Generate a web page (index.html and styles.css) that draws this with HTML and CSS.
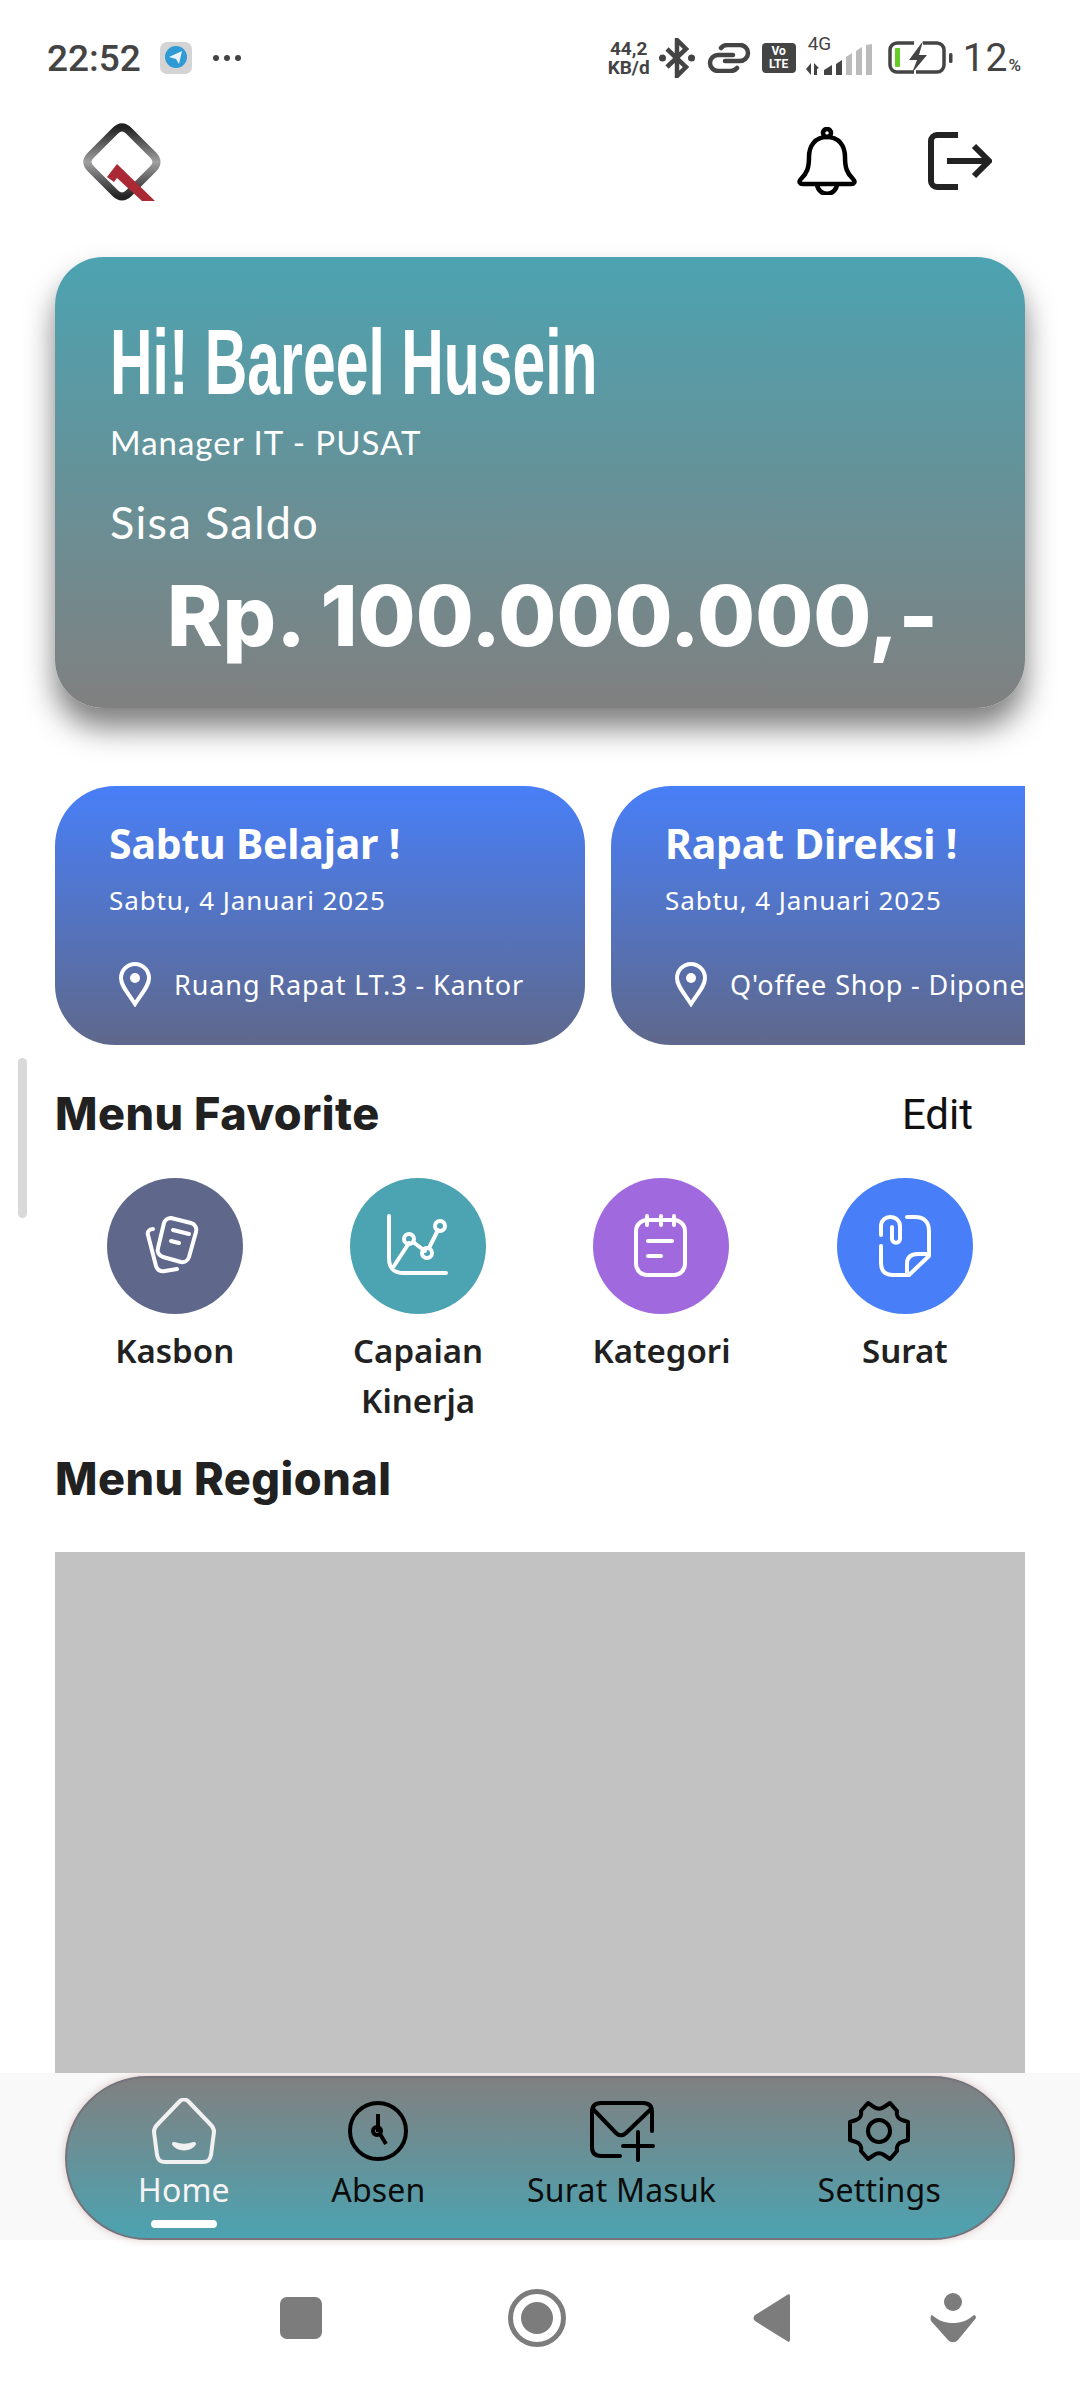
FILE: index.html
```html
<!DOCTYPE html>
<html lang="en">
<head>
    <meta charset="UTF-8">
    <meta name="viewport" content="width=device-width, initial-scale=1.0">
    <title>Home</title>
    <link rel="stylesheet" href="styles.css">
</head>
<body>
<div class="phone">
    <div class="status-bar">
        <div class="status-left">
            <span class="clock">22:52</span>
            <svg class="tg-icon" width="34" height="34" viewBox="0 0 34 34">
                <rect x="1" y="1" width="32" height="32" rx="7" fill="#d4d4d4"/>
                <circle cx="17" cy="16" r="11" fill="#2f9ad6"/>
                <path d="M10 16l13-6-3 13-3-5z" fill="#e8f3fa"/>
            </svg>
            <span class="dots"><i></i><i></i><i></i></span>
        </div>
        <div class="status-right">
            <span class="speed">44,2<br>KB/d</span>
            <svg width="36" height="40" viewBox="0 0 36 40" fill="none" stroke="#444" stroke-width="4.500">
                <path d="M8 11l19 18-9 9V2l9 9L8 29"/>
                <circle cx="3.500" cy="20" r="3.500" fill="#444" stroke="none"/>
                <circle cx="32.500" cy="20" r="3.500" fill="#444" stroke="none"/>
            </svg>
            <svg class="link-icon" width="44" height="30" viewBox="0 0 44 30" fill="none" stroke="#444" stroke-width="4.500" stroke-linecap="round">
                <path d="M26 12H11a8 8 0 0 0 0 16h13a8 8 0 0 0 6-3"/>
                <path d="M18 18h15a8 8 0 0 0 0-16H20a8 8 0 0 0-6 3"/>
            </svg>
            <span class="volte">Vo<br>LTE</span>
            <div class="signal">
                <span class="net">4G</span>
                <svg width="68" height="32" viewBox="0 0 68 32">
                    <path d="M6 19v12L1 25zM9 19l5 5-2 1v6H9z" fill="#444"/>
                    <path d="M19 26l8-5v10h-8zM31 20l6-4v15h-6z" fill="#444"/>
                    <path d="M41 13l6-4v22h-6zM51 7l6-4v28h-6zM61 1l6-1v31h-6z" fill="#bbb"/>
                </svg>
            </div>
            <svg class="battery-icon" width="66" height="36" viewBox="0 0 66 36" fill="none">
                <path d="M27 3H10a7 7 0 0 0-7 7v15a7 7 0 0 0 7 7h17M36 3h14a7 7 0 0 1 7 7v15a7 7 0 0 1-7 7H29" stroke="#444" stroke-width="3.500"/>
                <rect x="8" y="8" width="5" height="19" rx="1" fill="#65cc26"/>
                <path d="M36 1L22 20h8l-5 13 15-18h-8z" fill="#444"/>
                <rect x="62" y="13" width="3.500" height="10" rx="1.500" fill="#444"/>
            </svg>
            <span class="battery">12<small>%</small></span>
        </div>
    </div>

    <main class="content">
        <header class="top-bar">
            <svg class="logo" width="80" height="82" viewBox="0 0 80 82">
                <defs>
                    <linearGradient id="logoGrad" x1="0" y1="0" x2="0" y2="1">
                        <stop offset="0" stop-color="#222"/>
                        <stop offset="0.5" stop-color="#a0a0a0"/>
                        <stop offset="1" stop-color="#222"/>
                    </linearGradient>
                </defs>
                <path d="M33 9Q40 2 47 9L71 33Q78 40 71 47L47 71Q40 78 33 71L9 47Q2 40 9 33Z" fill="none" stroke="url(#logoGrad)" stroke-width="8"/>
                <path d="M25 55L35 42 73 79H60L35 56 32 60z" fill="#a92a35"/>
            </svg>
            <div class="top-actions">
                <svg width="62" height="68" viewBox="0 0 62 68" fill="none" stroke="#000" stroke-width="4.500">
                    <circle cx="31" cy="6" r="4"/>
                    <path d="M31 10c-12 0-18 9-18 20 0 11-2 16-8 22-3 3-1 5 2 5h48c3 0 5-2 2-5-6-6-8-11-8-22 0-11-6-20-18-20z" stroke-linejoin="round"/>
                    <path d="M21 57c1 13 19 13 20 0"/>
                </svg>
                <svg width="64" height="58" viewBox="0 0 64 58" fill="none" stroke="#222" stroke-width="6">
                    <path d="M30 3H9a6 6 0 0 0-6 6v40a6 6 0 0 0 6 6h21"/>
                    <path d="M19 29h41M46 14l15 15-15 15"/>
                </svg>
            </div>
        </header>

        <section class="balance-card">
            <div class="hello">Hi! Bareel Husein</div>
            <div class="role">Manager IT - PUSAT</div>
            <div class="balance-label">Sisa Saldo</div>
            <div class="balance-value">Rp. 100.000.000,-</div>
        </section>

        <section class="events">
            <div class="event-card">
                <div class="event-title">Sabtu Belajar !</div>
                <div class="event-date">Sabtu, 4 Januari 2025</div>
                <div class="event-place">
                    <svg class="pin" width="34" height="46" viewBox="0 0 34 46" fill="none" stroke="#fff" stroke-width="4">
                        <path d="M17 43C10 32 3 25 3 17a14 14 0 0 1 28 0c0 8-7 15-14 26z"/>
                        <circle cx="17" cy="17" r="5" fill="#fff" stroke="none"/>
                    </svg>
                    <span>Ruang Rapat LT.3 - Kantor</span>
                </div>
            </div>
            <div class="event-card">
                <div class="event-title">Rapat Direksi !</div>
                <div class="event-date">Sabtu, 4 Januari 2025</div>
                <div class="event-place">
                    <svg class="pin" width="34" height="46" viewBox="0 0 34 46" fill="none" stroke="#fff" stroke-width="4">
                        <path d="M17 43C10 32 3 25 3 17a14 14 0 0 1 28 0c0 8-7 15-14 26z"/>
                        <circle cx="17" cy="17" r="5" fill="#fff" stroke="none"/>
                    </svg>
                    <span>Q'offee Shop - Diponegoro</span>
                </div>
            </div>
        </section>

        <div class="section-head">
            <h2>Menu Favorite</h2>
            <span class="edit">Edit</span>
        </div>

        <section class="menu-grid">
            <div class="menu-item">
                <div class="menu-circle slate">
                    <svg width="64" height="64" viewBox="0 0 64 64" fill="none" stroke="#fff" stroke-width="4" stroke-linecap="round" stroke-linejoin="round">
                        <path d="M28 4l20 5a7 7 0 0 1 5 9l-7 25a7 7 0 0 1-8 5l-18-5a7 7 0 0 1-5-9l6-25a7 7 0 0 1 7-5z"/>
                        <path d="M30 16l16 4M28 27l8 2"/>
                        <path d="M10 15c-4 0-6 3-5 6l8 31c1 4 5 6 9 5l12-2"/>
                    </svg>
                </div>
                <span class="menu-label">Kasbon</span>
            </div>
            <div class="menu-item">
                <div class="menu-circle teal">
                    <svg width="64" height="64" viewBox="0 0 64 64" fill="none" stroke="#fff" stroke-width="4" stroke-linecap="round" stroke-linejoin="round">
                        <path d="M3 2v42c0 11 5 15 15 15h42"/>
                        <path d="M8 52l15-23M27 28l12 9M43 34l9-18"/>
                        <circle cx="23" cy="25" r="5"/>
                        <circle cx="41" cy="39" r="5"/>
                        <circle cx="54" cy="12" r="5"/>
                    </svg>
                </div>
                <span class="menu-label">Capaian<br>Kinerja</span>
            </div>
            <div class="menu-item">
                <div class="menu-circle purple">
                    <svg width="56" height="64" viewBox="0 0 56 64" fill="none" stroke="#fff" stroke-width="4" stroke-linecap="round" stroke-linejoin="round">
                        <rect x="3" y="6" width="49" height="55" rx="11"/>
                        <path d="M14 2v9M28 2v9M41 2v9"/>
                        <path d="M15 27h24M15 42h13"/>
                    </svg>
                </div>
                <span class="menu-label">Kategori</span>
            </div>
            <div class="menu-item">
                <div class="menu-circle blue">
                    <svg width="54" height="64" viewBox="0 0 54 64" fill="none" stroke="#fff" stroke-width="4" stroke-linecap="round" stroke-linejoin="round">
                        <path d="M3 21V11a9 9 0 0 1 9-8c6 0 10 4 10 9v13c0 5-8 5-8 0V13"/>
                        <path d="M29 3h8c9 0 14 5 14 14v25L31 61H15C7 61 3 57 3 49V32"/>
                        <path d="M29 60V50c0-7 4-10 11-10h11"/>
                    </svg>
                </div>
                <span class="menu-label">Surat</span>
            </div>
        </section>

        <h2 class="regional-head">Menu Regional</h2>
        <div class="regional-block"></div>
        <div class="scroll-thumb"></div>
    </main>

    <div class="nav-band">
        <nav class="bottom-nav">
            <div class="nav-item active">
                <svg width="66" height="66" viewBox="0 0 66 66" fill="none" stroke="#f1f1f1" stroke-width="4" stroke-linejoin="round">
                    <path d="M29 3c2-2 6-2 8 0l23 24c2 2 3 4 3 7l-3 23c-1 5-3 7-8 7H14c-5 0-7-2-8-7L3 34c0-3 1-5 3-7z"/>
                    <path d="M23 46c4 6 16 6 20 0-6 2-14 2-20 0z" fill="#f1f1f1"/>
                </svg>
                <span>Home</span>
                <i class="nav-line"></i>
            </div>
            <div class="nav-item">
                <svg width="62" height="66" viewBox="0 0 62 66" fill="none" stroke="#000" stroke-width="4">
                    <circle cx="31" cy="33" r="28"/>
                    <path d="M31 16v18M33 36l6 10"/>
                    <circle cx="30" cy="33" r="4"/>
                </svg>
                <span>Absen</span>
            </div>
            <div class="nav-item">
                <svg width="66" height="62" viewBox="0 0 66 62" fill="none" stroke="#000" stroke-width="4" stroke-linecap="round" stroke-linejoin="round">
                    <path d="M31 56H12C6 56 3 53 3 47V12c0-6 3-9 9-9h42c6 0 9 3 9 9v19"/>
                    <path d="M4 9l23 24c3 3 7 3 10 0L62 9"/>
                    <path d="M49 32v28M34 46h30"/>
                </svg>
                <span>Surat Masuk</span>
            </div>
            <div class="nav-item">
                <svg width="66" height="62" viewBox="0 0 66 62" fill="none" stroke="#000" stroke-width="4" stroke-linejoin="round">
                    <path d="M22 3l6 4c3 2 7 2 10 0l6-4 7 8c-1 4 1 8 5 9l6 2v18l-6 2c-4 1-6 5-5 9l-7 8-6-4c-3-2-7-2-10 0l-6 4-7-8c1-4-1-8-5-9l-6-2V22l6-2c4-1 6-5 5-9z"/>
                    <circle cx="33" cy="31" r="11"/>
                </svg>
                <span>Settings</span>
            </div>
        </nav>
    </div>

    <div class="system-nav">
        <span class="sys-square"></span>
        <span class="sys-circle"><i></i></span>
        <svg class="sys-back" width="40" height="50" viewBox="0 0 40 50">
            <path d="M38 3v44c0 2-2 2-3 1L3 28c-2-2-2-4 0-6L35 2c1-1 3-1 3 1z" fill="#7c7c7c"/>
        </svg>
        <svg class="sys-person" width="46" height="50" viewBox="0 0 46 50" fill="#7c7c7c">
            <circle cx="23" cy="9" r="9"/>
            <path d="M2 22c7 6 13 8 21 8s14-2 21-8c1 0 2 1 2 3L28 47c-3 3-7 3-10 0L1 28c-1-3 0-6 1-6z"/>
        </svg>
    </div>
</div>
</body>
</html>
```
FILE: styles.css
```css
* {
    box-sizing: border-box;
}

body {
    margin: 0;
    background-color: #fff;
    font-family: "Noto Sans", sans-serif;
}

.phone {
    width: 1080px;
    height: 2400px;
    overflow: hidden;
    display: flex;
    flex-direction: column;
}

/* status bar */
.status-bar {
    height: 100px;
    padding: 16px 58px 0 47px;
    display: flex;
    justify-content: space-between;
    align-items: center;
    color: #444;
    font-family: Roboto, sans-serif;
}

.status-left {
    display: flex;
    align-items: center;
}

.clock {
    font-size: 37px;
    font-weight: 500;
    margin-right: 18px;
}

.dots {
    display: flex;
    gap: 5px;
    margin-left: 20px;
}

.dots i {
    width: 6px;
    height: 6px;
    border-radius: 50%;
    background-color: #444;
}

.status-right {
    display: flex;
    align-items: center;
}

.speed {
    width: 44px;
    font-size: 19px;
    font-weight: 700;
    line-height: 19px;
    text-align: center;
    white-space: nowrap;
    margin-right: 8px;
}

.link-icon {
    margin-left: 12px;
}

.volte {
    width: 34px;
    height: 30px;
    margin-left: 11px;
    background-color: #444;
    border-radius: 4px;
    color: #fff;
    font-size: 12px;
    font-weight: 700;
    line-height: 13px;
    text-align: center;
    padding-top: 2px;
}

.signal {
    position: relative;
    width: 68px;
    height: 36px;
    margin-left: 9px;
}

.signal svg {
    position: absolute;
    left: 0;
    bottom: 0;
}

.net {
    position: absolute;
    left: 3px;
    top: -8px;
    font-size: 19px;
}

.battery-icon {
    margin-left: 14px;
}

.battery {
    margin-left: 10px;
    font-size: 39px;
    letter-spacing: 1px;
}

.battery small {
    font-size: 17px;
    font-weight: 500;
}

/* main content */
.content {
    position: relative;
    height: 1973px;
    padding: 0 55px;
    overflow: hidden;
    flex: none;
}

.top-bar {
    height: 157px;
    padding: 22px 33px 0 27px;
    display: flex;
    justify-content: space-between;
    align-items: flex-start;
}

.top-actions {
    display: flex;
    align-items: center;
    gap: 70px;
    margin-top: 5px;
}

.balance-card {
    height: 451px;
    padding: 66px 55px 0;
    border-radius: 48px;
    background: linear-gradient(#4ca3b1, #808080);
    box-shadow: 0 20px 30px rgba(0, 0, 0, 0.5);
    color: #fff;
}

.hello {
    height: 78px;
    font-family: "Liberation Sans", sans-serif;
    font-size: 92px;
    font-weight: 700;
    line-height: 78px;
    white-space: nowrap;
    transform: scaleX(0.64);
    transform-origin: left center;
}

.role {
    margin-top: 21px;
    font-family: Lato, sans-serif;
    font-size: 33px;
    letter-spacing: 1px;
}

.balance-label {
    margin-top: 33px;
    font-family: Lato, sans-serif;
    font-size: 45px;
    letter-spacing: 1.3px;
}

.balance-value {
    margin-top: 16px;
    padding-left: 25px;
    font-family: Inter, sans-serif;
    font-size: 84px;
    font-weight: 800;
    text-align: center;
    white-space: nowrap;
}

.events {
    margin-top: 78px;
    display: flex;
    gap: 26px;
    overflow: hidden;
}

.event-card {
    flex: none;
    width: 530px;
    height: 259px;
    padding: 29px 25px 0 54px;
    border-radius: 60px;
    background: linear-gradient(#487ff8, #5f688b);
    color: #fff;
}

.event-title {
    font-size: 41px;
    font-weight: 700;
    line-height: 56px;
    letter-spacing: -0.2px;
}

.event-date {
    margin-top: 11px;
    font-size: 26px;
    line-height: 36px;
    letter-spacing: 0.9px;
}

.event-place {
    margin-top: 43px;
    display: flex;
    align-items: center;
    gap: 22px;
    font-size: 27px;
    letter-spacing: 0.9px;
    white-space: nowrap;
}

.pin {
    flex: none;
    margin-left: 9px;
}

.section-head {
    margin-top: 40px;
    height: 56px;
    display: flex;
    justify-content: space-between;
    align-items: center;
    padding-right: 52px;
}

h2 {
    margin: 0;
    font-family: Inter, sans-serif;
    font-size: 45px;
    font-weight: 800;
    letter-spacing: 0.5px;
    color: #212121;
}

.edit {
    font-family: Roboto, sans-serif;
    font-size: 42px;
    padding-top: 2px;
    color: #111;
}

.menu-grid {
    margin-top: 37px;
    margin-left: -2px;
    display: grid;
    grid-template-columns: repeat(4, 243.4px);
}

.menu-item {
    display: flex;
    flex-direction: column;
    align-items: center;
}

.menu-circle {
    width: 136px;
    height: 136px;
    border-radius: 50%;
    display: flex;
    justify-content: center;
    align-items: center;
}

.slate { background-color: #5f688b; }
.teal { background-color: #4ca3b1; }
.purple { background-color: #a069dd; }
.blue { background-color: #487ff8; }

.menu-label {
    margin-top: 12px;
    font-size: 33px;
    font-weight: 600;
    line-height: 50px;
    text-align: center;
    color: #212121;
}

.regional-head {
    margin-top: 25px;
    height: 56px;
    line-height: 56px;
}

.regional-block {
    margin-top: 45px;
    height: 600px;
    background-color: #c2c2c2;
}

.scroll-thumb {
    position: absolute;
    left: 18px;
    top: 958px;
    width: 9px;
    height: 160px;
    border-radius: 5px;
    background-color: #d9d9d9;
}

/* bottom nav */
.nav-band {
    height: 167px;
    flex: none;
    padding: 3px 65px 0;
    background-color: #f9f9f9;
}

.bottom-nav {
    height: 164px;
    padding: 20px 72px 0 71px;
    display: flex;
    justify-content: space-between;
    border-radius: 82px;
    border: 2px solid #74747c;
    background: linear-gradient(#808080, #4ca3b1);
    box-shadow: 0 0 8px rgba(160, 80, 80, 0.3);
}

.nav-item {
    display: flex;
    flex-direction: column;
    align-items: center;
    gap: 6px;
    font-size: 32px;
    line-height: 40px;
    letter-spacing: 0.2px;
    color: #0c0c0c;
}

.nav-item svg {
    height: 66px;
}

.nav-item.active {
    color: #f4f4f4;
}

.nav-line {
    width: 66px;
    height: 8px;
    margin-top: 4px;
    border-radius: 4px;
    background-color: #fff;
}

/* system nav */
.system-nav {
    flex: 1;
    display: flex;
    align-items: center;
    padding: 0 0 4px 280px;
}

.sys-square {
    width: 42px;
    height: 42px;
    border-radius: 7px;
    background-color: #7c7c7c;
}

.sys-circle {
    width: 58px;
    height: 58px;
    margin-left: 186px;
    border: 5px solid #7c7c7c;
    border-radius: 50%;
    display: flex;
    justify-content: center;
    align-items: center;
}

.sys-circle i {
    width: 32px;
    height: 32px;
    border-radius: 50%;
    background-color: #7c7c7c;
}

.sys-back {
    margin-left: 186px;
}

.sys-person {
    margin-left: 138px;
}
```
